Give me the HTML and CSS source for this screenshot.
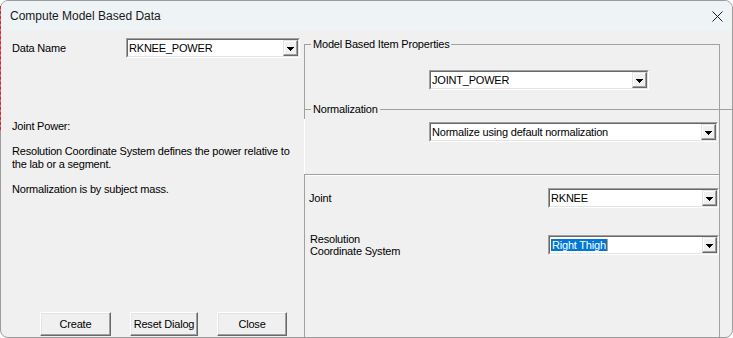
FILE: index.html
```html
<!DOCTYPE html>
<html lang="en">
<head>
<meta charset="utf-8">
<title>Compute Model Based Data</title>
<link rel="stylesheet" href="styles.css">
</head>
<body>
<div class="window">
  <div class="titlebar">
    <span class="title">Compute Model Based Data</span>
    <svg class="close" width="11" height="11" viewBox="0 0 11 11"><path d="M0.5 0.5L10.5 10.5M10.5 0.5L0.5 10.5" stroke="#1b1b1b" stroke-width="1"/></svg>
  </div>
  <div class="content">
    <div class="left">
      <div class="field-row">
        <span class="label">Data Name</span>
        <div class="combo combo-data">
          <div class="combo-field"><span class="combo-value">RKNEE_POWER</span><span class="combo-btn"><svg width="7" height="4" viewBox="0 0 7 4"><path d="M0 0h7v1h-1v1h-1v1h-1v1h-1v-1h-1v-1h-1v-1h-1z" fill="#000"/></svg></span></div>
        </div>
      </div>
      <div class="desc">
        <p>Joint Power:</p>
        <p>Resolution Coordinate System defines the power relative to<br>the lab or a segment.</p>
        <p>Normalization is by subject mass.</p>
      </div>
      <div class="buttons">
        <button class="btn btn-create">Create</button>
        <button class="btn btn-reset">Reset Dialog</button>
        <button class="btn btn-close">Close</button>
      </div>
    </div>
    <div class="right">
      <div class="frame">
        <div class="sec sec-a">
          <div class="ghead"><span>Model Based Item Properties</span></div>
          <div class="combo combo-item">
            <div class="combo-field"><span class="combo-value">JOINT_POWER</span><span class="combo-btn"><svg width="7" height="4" viewBox="0 0 7 4"><path d="M0 0h7v1h-1v1h-1v1h-1v1h-1v-1h-1v-1h-1v-1h-1z" fill="#000"/></svg></span></div>
          </div>
        </div>
        <div class="sec sec-b">
          <div class="ghead ghead-wide"><span>Normalization</span></div>
          <div class="combo combo-norm">
            <div class="combo-field"><span class="combo-value">Normalize using default normalization</span><span class="combo-btn"><svg width="7" height="4" viewBox="0 0 7 4"><path d="M0 0h7v1h-1v1h-1v1h-1v1h-1v-1h-1v-1h-1v-1h-1z" fill="#000"/></svg></span></div>
          </div>
        </div>
        <div class="sec sec-c">
          <div class="prop-grid">
            <span class="prop-label">Joint</span>
            <div class="combo combo-prop">
              <div class="combo-field"><span class="combo-value">RKNEE</span><span class="combo-btn"><svg width="7" height="4" viewBox="0 0 7 4"><path d="M0 0h7v1h-1v1h-1v1h-1v1h-1v-1h-1v-1h-1v-1h-1z" fill="#000"/></svg></span></div>
            </div>
            <span class="prop-label prop-label-2">Resolution<br>Coordinate System</span>
            <div class="combo combo-prop">
              <div class="combo-field"><span class="combo-value"><span class="sel">Right Thigh</span></span><span class="combo-btn"><svg width="7" height="4" viewBox="0 0 7 4"><path d="M0 0h7v1h-1v1h-1v1h-1v1h-1v-1h-1v-1h-1v-1h-1z" fill="#000"/></svg></span></div>
            </div>
          </div>
        </div>
      </div>
    </div>
  </div>
</div>
<div class="ghost"></div>
</body>
</html>
```

FILE: styles.css
```css
html, body {
  margin: 0;
  padding: 0;
}

body {
  width: 733px;
  height: 338px;
  overflow: hidden;
  background: #ffffff;
  position: relative;
  font-family: "Liberation Sans", Arial, sans-serif;
  font-size: 11px;
  letter-spacing: -0.2px;
  color: #000;
}

.window {
  box-sizing: border-box;
  width: 733px;
  height: 338px;
  border: 1px solid #9c9c9c;
  border-radius: 8px;
  overflow: hidden;
  display: flex;
  flex-direction: column;
  background: #f0f0f0;
}

.titlebar {
  height: 29px;
  flex: none;
  display: flex;
  align-items: center;
  justify-content: space-between;
  padding: 0 9px 0 9px;
  background: #eef3f6;
}

.title {
  font-family: "Liberation Sans", Arial, sans-serif;
  font-size: 12px;
  letter-spacing: 0;
  color: #1a1a1a;
}

.close {
  display: block;
  margin-top: 1px;
}

.content {
  flex: 1;
  display: flex;
  min-height: 0;
}

/* ---------- left pane ---------- */
.left {
  width: 303px;
  flex: none;
  box-sizing: border-box;
  display: flex;
  flex-direction: column;
  padding: 8px 0 1px 11px;
}

.field-row {
  display: flex;
  align-items: center;
}

.label {
  width: 114px;
  line-height: 13px;
}

.desc {
  margin-top: 62px;
  line-height: 13px;
  white-space: nowrap;
}

.desc p {
  margin: 0 0 12px 0;
}

.buttons {
  margin-top: auto;
  display: flex;
  gap: 19px;
  padding-left: 28px;
}

.btn {
  box-sizing: border-box;
  height: 24px;
  margin: 0;
  padding: 0;
  border: 1px solid;
  border-color: #ffffff #696969 #696969 #ffffff;
  box-shadow: inset -1px -1px #a0a0a0, inset 1px 1px #e3e3e3;
  background: #f0f0f0;
  font-family: "Liberation Sans", Arial, sans-serif;
  font-size: 11px;
  letter-spacing: -0.2px;
  color: #000;
}

.btn-create { width: 71px; }
.btn-reset { width: 68px; }
.btn-close { width: 70px; }

/* ---------- combo boxes ---------- */
.combo {
  box-sizing: border-box;
  height: 20px;
  border: 1px solid;
  border-color: #a0a0a0 #ffffff #ffffff #a0a0a0;
  display: flex;
}

.combo-field {
  flex: 1;
  display: flex;
  border: 1px solid;
  border-color: #696969 #e3e3e3 #e3e3e3 #696969;
  background: #ffffff;
  min-width: 0;
}

.combo-value {
  flex: 1;
  padding-left: 1px;
  line-height: 16px;
  white-space: nowrap;
  overflow: hidden;
}

.combo-btn {
  box-sizing: border-box;
  width: 15px;
  flex: none;
  display: flex;
  align-items: center;
  justify-content: center;
  background: #f0f0f0;
  border: 1px solid;
  border-color: #e3e3e3 #696969 #696969 #e3e3e3;
  box-shadow: inset -1px -1px #a0a0a0, inset 1px 1px #ffffff;
}

.combo-btn svg {
  display: block;
  shape-rendering: crispEdges;
  margin-top: 1px;
}

.combo-data { width: 174px; }
.combo-item { width: 220px; margin: 19px 0 0 124px; }
.combo-norm { width: 289px; margin: 6px 0 0 124px; }
.combo-prop { width: 171px; }

.sel {
  background: #0078d7;
  color: #ffffff;
  padding: 0 1px 0 1px;
  border-right: 1px solid #f39a1d;
}

/* ---------- right pane ---------- */
.right {
  flex: 1;
  display: flex;
  flex-direction: column;
}

.frame {
  flex: 1;
  margin: 14px 12px 0 0;
  border-right: 1px solid #a0a0a0;
  display: flex;
  flex-direction: column;
}

.sec {
  display: flex;
  flex-direction: column;
}

.ghead {
  display: flex;
  align-items: center;
  height: 13px;
  margin-left: -1px;
  line-height: 13px;
}

.ghead::before {
  content: "";
  width: 7px;
  border-top: 1px solid #a0a0a0;
}

.ghead::after {
  content: "";
  flex: 1;
  border-top: 1px solid #a0a0a0;
}

.ghead span {
  padding: 0 2px;
}

.sec-a {
  border-left: 1px solid #a0a0a0;
  padding-bottom: 13px;
}

.sec-a .ghead {
  margin-top: -6px;
}

.sec-b {
  padding: 0 0 32px 1px;
  background:
    linear-gradient(#a0a0a0, #a0a0a0) left top / 1px 16px no-repeat,
    linear-gradient(#ffffff, #ffffff) left top / 1px 100% no-repeat;
}

.ghead-wide {
  margin-right: -13px;
}

.sec-c {
  flex: 1;
  border-left: 1px solid #a0a0a0;
  border-top: 1px solid #a0a0a0;
  box-shadow: inset 0 1px #ffffff;
  padding: 13px 0 0 4px;
}

.prop-grid {
  display: grid;
  grid-template-columns: 1fr 171px;
  row-gap: 25px;
  align-items: center;
}

.prop-label {
  line-height: 13px;
}

.prop-label-2 {
  line-height: 12px;
  padding-left: 1px;
}

/* faint dashed focus outline of a window behind the dialog */
.ghost {
  position: absolute;
  left: 0;
  top: 6px;
  height: 124px;
  border-left: 1px dashed #d8262a;
}
```
